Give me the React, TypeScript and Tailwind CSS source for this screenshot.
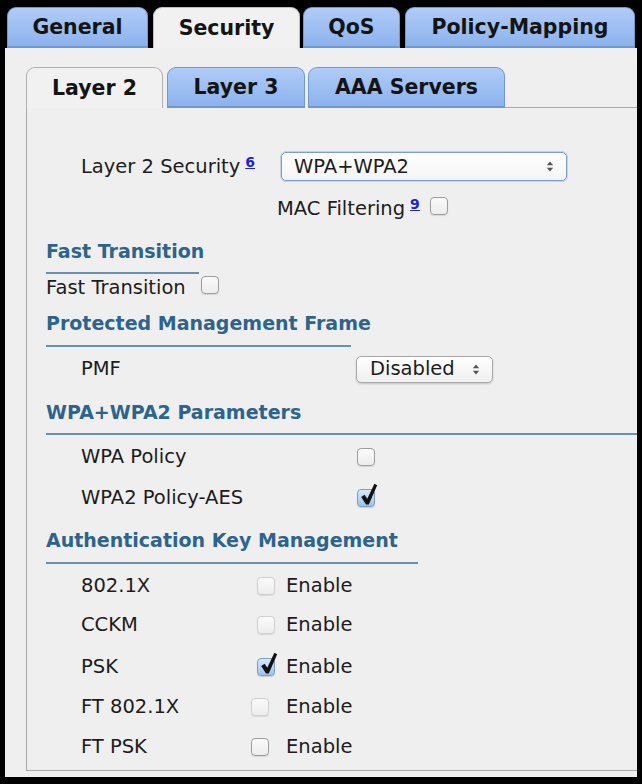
import React from "react";

const sans = "font-['DejaVu_Sans','Verdana',sans-serif]";

function Arrows() {
  return (
    <svg width="8" height="13" viewBox="0 0 8 13" className="shrink-0">
      <polygon points="0.8,5.2 4,1.4 7.2,5.2" fill="#555" />
      <polygon points="0.8,7.8 4,11.6 7.2,7.8" fill="#555" />
    </svg>
  );
}

function Check() {
  return (
    <svg
      width="20"
      height="24"
      viewBox="0 0 20 24"
      className="absolute left-[1px] top-[-7px]"
    >
      <path d="M2.2 14 L5.6 11.8 L8.3 15.8 L15.4 0.8 L18.2 2.2 L9.8 21.6 L7 21.6 Z" fill="#111" />
    </svg>
  );
}

function Box({
  checked = false,
  tone = "normal",
}: {
  checked?: boolean;
  tone?: "normal" | "faint";
}) {
  if (checked) {
    return (
      <span className="relative inline-block h-[18px] w-[18px] shrink-0 rounded-[4px] border border-[#7d9dc6] bg-linear-to-b from-[#d7e7fb] to-[#9fc2ee] shadow-[0_1px_1px_rgba(0,0,0,0.15)]">
        <Check />
      </span>
    );
  }
  const border = tone === "faint" ? "border-[#cfcfcf]" : "border-[#9d9d9d]";
  return (
    <span
      className={`inline-block h-[18px] w-[18px] shrink-0 rounded-[4px] border ${border} bg-linear-to-b from-[#fafafa] to-[#ededed] shadow-[0_1px_1px_rgba(0,0,0,0.1)]`}
    />
  );
}

function Sup({ n }: { n: string }) {
  return (
    <span className="relative top-[-5px] ml-[5px] text-[14px] font-bold leading-none text-[#1f1fd6] underline">
      {n}
    </span>
  );
}

function Heading({ text }: { text: string }) {
  return (
    <div className="h-[24px] text-[19px] font-bold leading-[24px] text-[#2d638c]">{text}</div>
  );
}

function Rule({ w }: { w: string }) {
  return <div className={`h-[2px] bg-[#6790b3] ${w}`} />;
}

const blueTab =
  "flex h-[41px] items-center justify-center rounded-t-[9px] border border-b-[2px] border-[#7098d2] bg-linear-to-b from-[#b0ccf8] to-[#8cb2ec] text-[20.5px] font-bold text-[#141414]";

function OuterTabs() {
  return (
    <div className="flex h-[48px] items-end bg-black pl-[2px]">
      <div className={`${blueTab} w-[141px]`}>General</div>
      <div className="ml-[5px] flex h-[41px] w-[147px] items-center justify-center rounded-t-[9px] border border-b-0 border-[#bdbdbd] bg-[#f1f1f1] text-[20.5px] font-bold text-[#141414]">
        Security
      </div>
      <div className={`${blueTab} ml-[3px] w-[97px]`}>QoS</div>
      <div className={`${blueTab} ml-[5px] w-[230px]`}>Policy-Mapping</div>
    </div>
  );
}

function InnerTabs() {
  return (
    <div className="flex h-[41px] items-end">
      <div className="flex h-[41px] w-[137px] items-center justify-center rounded-t-[9px] border border-b-0 border-[#b0b0b0] bg-[#f1f1f1] text-[20.5px] font-bold text-[#141414]">
        Layer 2
      </div>
      <div className={`${blueTab} ml-[4px] w-[138px]`}>Layer 3</div>
      <div className={`${blueTab} ml-[3px] w-[197px]`}>AAA Servers</div>
      <div className="h-[41px] flex-1 border-b border-[#a8a8a8]" />
    </div>
  );
}

function AkmRow({
  label,
  checked,
  tone,
  wide,
  mt,
}: {
  label: string;
  checked?: boolean;
  tone?: "normal" | "faint";
  wide?: boolean;
  mt: string;
}) {
  return (
    <div className={`flex h-[24px] items-center ${mt}`}>
      <span className={`ml-[35px] ${wide ? "w-[170px]" : "w-[176px]"}`}>{label}</span>
      <Box checked={checked} tone={tone} />
      <span className={wide ? "ml-[17px]" : "ml-[11px]"}>Enable</span>
    </div>
  );
}

export default function App() {
  return (
    <div className={`h-[784px] w-[642px] bg-black px-[5px] ${sans} text-[19.5px] text-[#1c1c1c]`}>
      <OuterTabs />
      <div className="bg-[#efefef] pb-[6px] pt-[19px]">
        <div className="ml-[21px]">
          <InnerTabs />
          <div className="border-b border-l border-[#a8a8a8] pb-[11px] pl-[19px] pt-[44px]">
            {/* Layer 2 security selection */}
            <div className="flex h-[29px] items-center">
              <div className="ml-[35px] flex w-[200px] items-center">
                <span>Layer 2 Security</span>
                <Sup n="6" />
              </div>
              <div className="flex h-[29px] w-[286px] items-center justify-between rounded-[5px] border border-[#7a9ecf] bg-linear-to-b from-white to-[#f4f4f4] pl-[12px] pr-[12px] shadow-[0_0_0_1px_rgba(140,175,225,0.45)]">
                <span>WPA+WPA2</span>
                <Arrows />
              </div>
            </div>

            <div className="mt-[16px] flex h-[24px] items-center">
              <span className="ml-[231px]">MAC Filtering</span>
              <Sup n="9" />
              <span className="ml-[10px]">
                <Box />
              </span>
            </div>

            {/* Fast Transition */}
            <div className="mt-[18px]">
              <Heading text="Fast Transition" />
            </div>
            <div className="mt-[9px]">
              <Rule w="w-[153px]" />
            </div>
            <div className="mt-[2px] flex h-[24px] items-center">
              <span>Fast Transition</span>
              <span className="ml-[15px]">
                <Box />
              </span>
            </div>

            {/* Protected Management Frame */}
            <div className="mt-[11px]">
              <Heading text="Protected Management Frame" />
            </div>
            <div className="mt-[10px]">
              <Rule w="w-[305px]" />
            </div>
            <div className="mt-[8px] flex h-[28px] items-center">
              <span className="ml-[35px] w-[275px]">PMF</span>
              <div className="flex h-[27px] w-[137px] items-center justify-between rounded-[5px] border border-[#a9a9a9] bg-linear-to-b from-white to-[#efefef] pl-[13px] pr-[12px] shadow-[0_1px_2px_rgba(0,0,0,0.2)]">
                <span>Disabled</span>
                <Arrows />
              </div>
            </div>

            {/* WPA+WPA2 Parameters */}
            <div className="mt-[17px]">
              <Heading text="WPA+WPA2 Parameters" />
            </div>
            <div className="mt-[9px]">
              <Rule w="w-full" />
            </div>
            <div className="mt-[10px] flex h-[24px] items-center">
              <span className="ml-[35px] w-[276px]">WPA Policy</span>
              <Box />
            </div>
            <div className="mt-[17px] flex h-[24px] items-center">
              <span className="ml-[35px] w-[276px]">WPA2 Policy-AES</span>
              <Box checked />
            </div>

            {/* Authentication Key Management */}
            <div className="mt-[18px]">
              <Heading text="Authentication Key Management" />
            </div>
            <div className="mt-[10px]">
              <Rule w="w-[372px]" />
            </div>
            <AkmRow label="802.1X" tone="faint" mt="mt-[10px]" />
            <AkmRow label="CCKM" tone="faint" mt="mt-[15px]" />
            <AkmRow label="PSK" checked mt="mt-[18px]" />
            <AkmRow label="FT 802.1X" tone="faint" wide mt="mt-[16px]" />
            <AkmRow label="FT PSK" wide mt="mt-[16px]" />
          </div>
        </div>
      </div>
    </div>
  );
}
